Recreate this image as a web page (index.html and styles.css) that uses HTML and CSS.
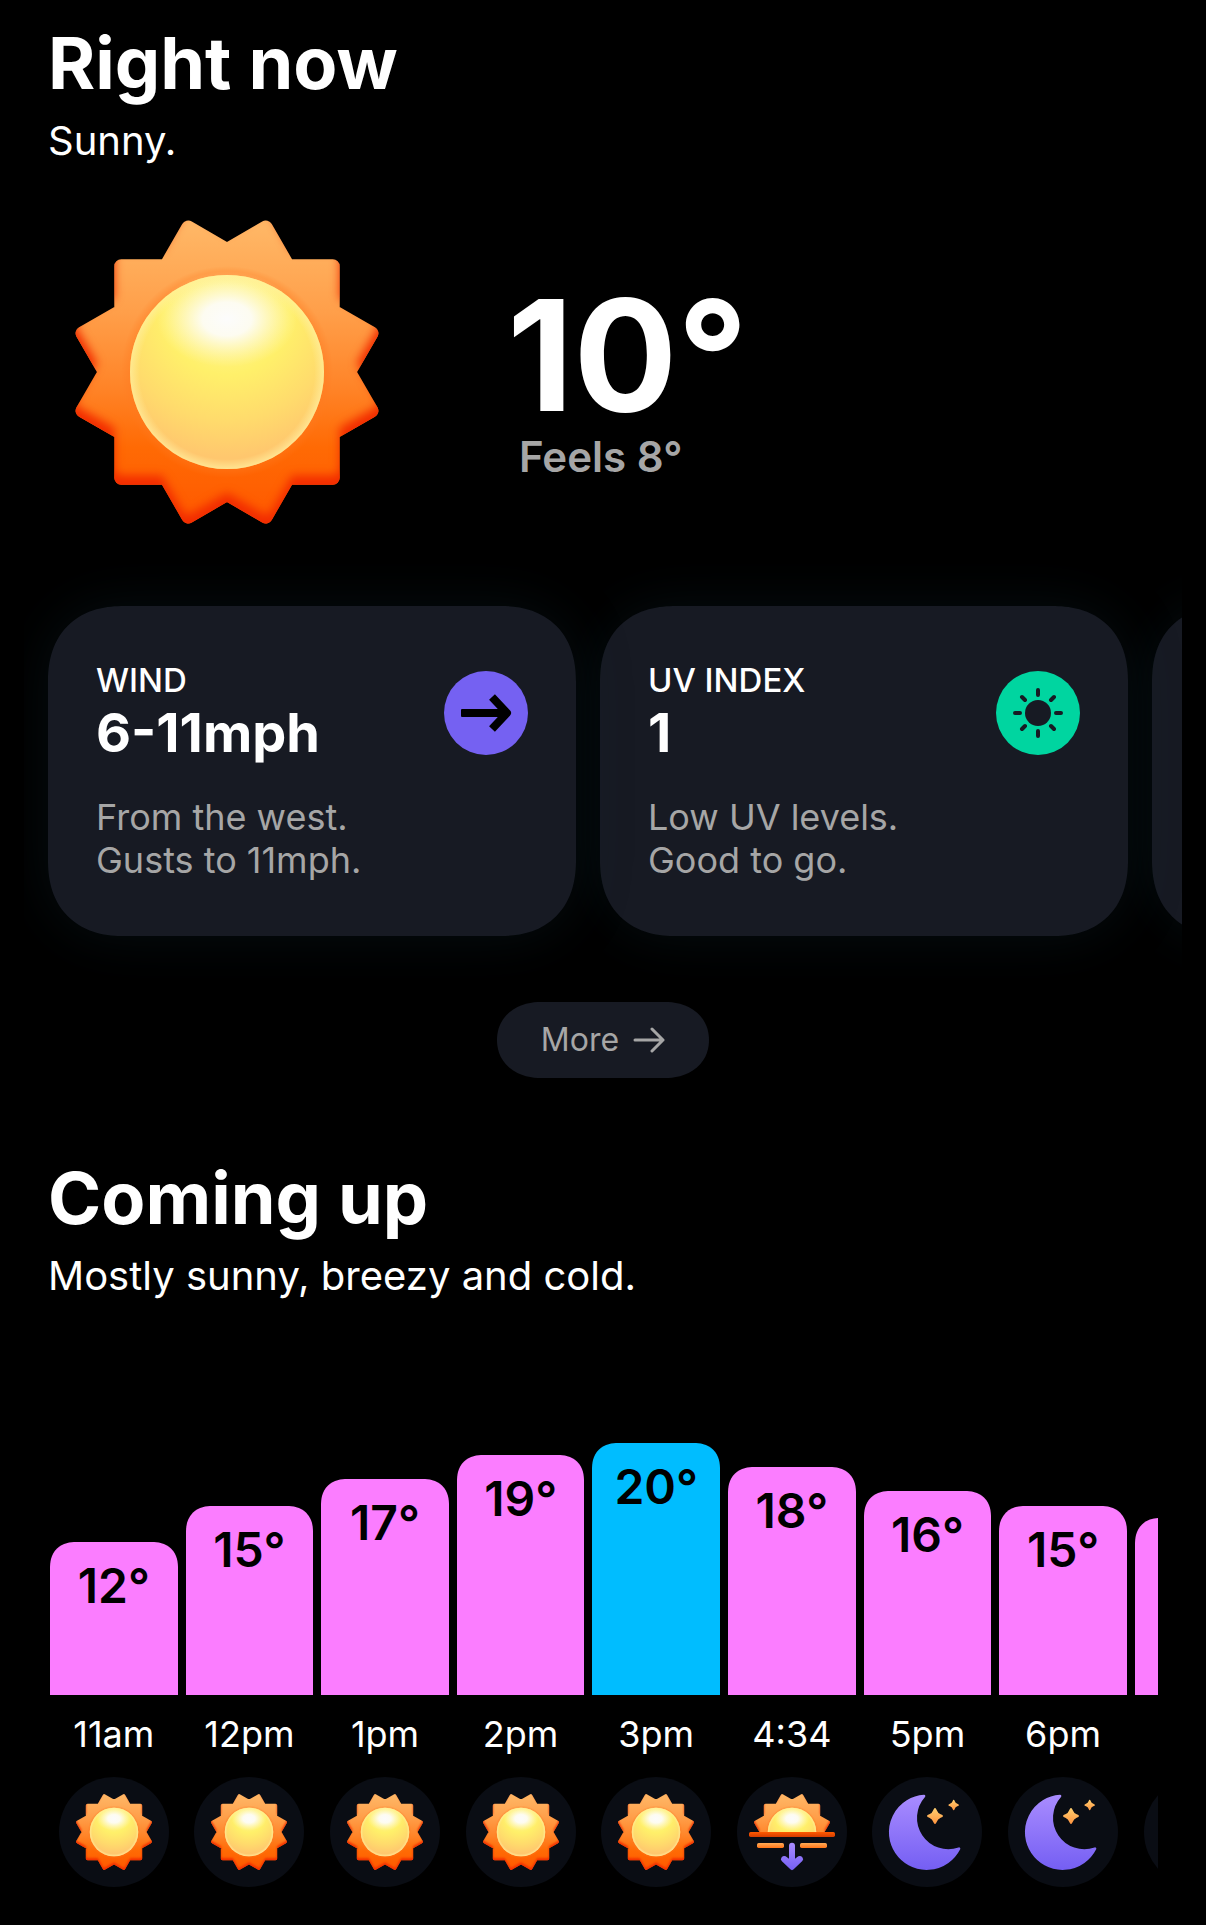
FILE: index.html
```html
<!DOCTYPE html>
<html lang="en">
<head>
<meta charset="utf-8">
<meta name="viewport" content="width=device-width, initial-scale=1">
<title>Weather</title>
<link rel="stylesheet" href="styles.css">
</head>
<body>
<svg class="sprite" aria-hidden="true">
  <defs>
    <linearGradient id="rays" gradientUnits="userSpaceOnUse" x1="0" y1="-151" x2="0" y2="151">
      <stop offset="0" stop-color="#ffb867"/>
      <stop offset=".3" stop-color="#ff9f4a"/>
      <stop offset=".55" stop-color="#ff8428"/>
      <stop offset=".75" stop-color="#ff6a04"/>
      <stop offset="1" stop-color="#ff5800"/>
    </linearGradient>
    <radialGradient id="ball" gradientUnits="userSpaceOnUse" cx="0" cy="-60" r="165">
      <stop offset="0" stop-color="#fff6a0"/>
      <stop offset=".38" stop-color="#fff06a"/>
      <stop offset=".66" stop-color="#ffdb6c"/>
      <stop offset=".88" stop-color="#ffc76e"/>
    </radialGradient>
    <radialGradient id="shine">
      <stop offset="0" stop-color="#fcfcfc"/>
      <stop offset=".35" stop-color="#fdfcf6" stop-opacity=".95"/>
      <stop offset="1" stop-color="#fff8c0" stop-opacity="0"/>
    </radialGradient>
    <radialGradient id="rim" gradientUnits="userSpaceOnUse" cx="0" cy="0" r="97">
      <stop offset=".9" stop-color="#fff0a0" stop-opacity="0"/>
      <stop offset="1" stop-color="#fff0a0" stop-opacity=".7"/>
    </radialGradient>
    <radialGradient id="halo" gradientUnits="userSpaceOnUse" cx="0" cy="0" r="106">
      <stop offset=".9" stop-color="#ff7a20" stop-opacity=".5"/>
      <stop offset="1" stop-color="#ff7a20" stop-opacity="0"/>
    </radialGradient>
    <filter id="bevel" x="-10%" y="-10%" width="120%" height="120%" color-interpolation-filters="sRGB">
      <feGaussianBlur in="SourceAlpha" stdDeviation="5"/>
      <feOffset dy="-9" result="inner"/>
      <feFlood flood-color="#f22c00"/>
      <feComposite operator="out" in2="inner"/>
      <feComposite operator="in" in2="SourceAlpha" result="edge"/>
      <feMerge><feMergeNode in="SourceGraphic"/><feMergeNode in="edge"/></feMerge>
    </filter>
    <linearGradient id="night" gradientUnits="userSpaceOnUse" x1="0" y1="-112" x2="0" y2="112">
      <stop offset="0" stop-color="#a98cff"/>
      <stop offset="1" stop-color="#755ff3"/>
    </linearGradient>
    <linearGradient id="down" gradientUnits="userSpaceOnUse" x1="0" y1="33" x2="0" y2="114">
      <stop offset="0" stop-color="#a98cff"/>
      <stop offset="1" stop-color="#755ff3"/>
    </linearGradient>
    <linearGradient id="star" x1="0" y1="0" x2="0" y2="1">
      <stop offset="0" stop-color="#ffd070"/>
      <stop offset="1" stop-color="#ff9440"/>
    </linearGradient>
    <linearGradient id="haze" x1="0" y1="0" x2="0" y2="1">
      <stop offset="0" stop-color="#ffab58"/>
      <stop offset="1" stop-color="#ff7418"/>
    </linearGradient>
    <linearGradient id="horizon" x1="0" y1="0" x2="0" y2="1">
      <stop offset="0" stop-color="#ff5a00"/>
      <stop offset="1" stop-color="#d43c00"/>
    </linearGradient>
    <clipPath id="above"><rect x="-165" y="-165" width="330" height="166"/></clipPath>

    <g id="sun">
      <polygon fill="url(#rays)" stroke="url(#rays)" stroke-width="14" stroke-linejoin="round" filter="url(#bevel)"
        points="122,0 144.4,38.7 105.7,61 105.7,105.7 61,105.7 38.7,144.4 0,122 -38.7,144.4 -61,105.7 -105.7,105.7 -105.7,61 -144.4,38.7 -122,0 -144.4,-38.7 -105.7,-61 -105.7,-105.7 -61,-105.7 -38.7,-144.4 0,-122 38.7,-144.4 61,-105.7 105.7,-105.7 105.7,-61 144.4,-38.7"/>
      <circle r="106" fill="url(#halo)"/>
      <circle r="97" fill="url(#ball)"/>
      <ellipse cx="0" cy="-53" rx="70" ry="48" fill="url(#shine)"/>
      <circle r="97" fill="url(#rim)"/>
    </g>
    <g id="sunny"><use href="#sun" transform="scale(.75)"/></g>
    <g id="sunset">
      <g clip-path="url(#above)"><use href="#sun" transform="scale(.75)"/></g>
      <rect x="-129" y="0" width="258" height="15" rx="5" fill="url(#horizon)"/>
      <rect x="-105" y="33" width="81" height="15" rx="5" fill="url(#haze)"/>
      <rect x="24" y="33" width="81" height="15" rx="5" fill="url(#haze)"/>
      <path fill="url(#down)" d="M-9 41a9 9 0 0 1 18 0V80L19 73Q26 70 31 76Q36 82 31 87L5 112Q0 117-5 112L-31 87Q-36 82-31 76Q-26 70-19 73L-9 80Z"/>
    </g>
    <g id="moon">
      <path fill="url(#night)" stroke="url(#night)" stroke-width="8" stroke-linejoin="round" d="M-9-108A109 109 0 1 0 96 50A98 98 0 0 1-9-108Z"/>
      <path fill="url(#star)" d="M24-72Q27-72 29-66Q32-57 41-53Q48-51 48-48Q48-45 41-43Q32-39 29-30Q27-24 24-24Q21-24 19-30Q16-39 7-43Q0-45 0-48Q0-51 7-53Q16-57 19-66Q21-72 24-72Z"/>
      <path fill="url(#star)" d="M80-97Q82-97 83-93Q85-87 91-85Q96-83 96-81Q96-79 91-77Q85-75 83-69Q82-65 80-65Q78-65 77-69Q75-75 69-77Q64-79 64-81Q64-83 69-85Q75-87 77-93Q78-97 80-97Z"/>
    </g>
  </defs>
</svg>

<main class="page">
  <section>
    <header class="heading">
      <h2 class="title">Right now</h2>
      <p class="subtitle">Sunny.</p>
    </header>

    <div class="current">
      <svg class="current-icon" viewBox="-160 -160 320 320" role="img" aria-label="Sunny"><use href="#sun"/></svg>
      <div class="current-temps">
        <p class="temp">10°</p>
        <p class="feels">Feels 8°</p>
      </div>
    </div>

    <div class="cards">
      <article class="card">
        <div class="card-head">
          <div>
            <h3 class="card-label">WIND</h3>
            <p class="card-value">6-11mph</p>
          </div>
          <svg class="badge badge-wind" viewBox="-42 -42 84 84" aria-hidden="true">
            <path d="M-24 0H18" fill="none" stroke="#000" stroke-width="8"/>
            <path d="M6-16L21 0L6 16" fill="none" stroke="#000" stroke-width="8" stroke-linejoin="round"/>
            <rect x="-25" y="-4" width="6" height="8" rx="1"/>
          </svg>
        </div>
        <p class="card-text">From the west.<br>Gusts to 11mph.</p>
      </article>
      <article class="card">
        <div class="card-head">
          <div>
            <h3 class="card-label">UV INDEX</h3>
            <p class="card-value">1</p>
          </div>
          <svg class="badge badge-uv" viewBox="-42 -42 84 84" aria-hidden="true">
            <circle r="13" fill="#171a23"/>
            <path stroke="#171a23" stroke-width="4" stroke-linecap="round" d="M0-23V-18M0 23V18M-23 0H-18M23 0H18M-16-16L-13-13M16-16L13-13M-16 16L-13 13M16 16L13 13"/>
          </svg>
        </div>
        <p class="card-text">Low UV levels.<br>Good to go.</p>
      </article>
      <article class="card" aria-hidden="true"></article>
    </div>

    <button class="more" type="button">More
      <svg class="more-arrow" viewBox="0 0 32 32" aria-hidden="true"><path d="M2 16H30M19 5L30 16L19 27" fill="none" stroke="currentColor" stroke-width="3" stroke-linecap="round" stroke-linejoin="round"/></svg>
    </button>
  </section>

  <section>
    <header class="heading">
      <h2 class="title">Coming up</h2>
      <p class="subtitle">Mostly sunny, breezy and cold.</p>
    </header>

    <ol class="hours">
      <li class="hour"><div class="bar" style="height:153px">12°</div><span class="time">11am</span><svg class="disc" viewBox="-165 -165 330 330"><use href="#sunny"/></svg></li>
      <li class="hour"><div class="bar" style="height:189px">15°</div><span class="time">12pm</span><svg class="disc" viewBox="-165 -165 330 330"><use href="#sunny"/></svg></li>
      <li class="hour"><div class="bar" style="height:216px">17°</div><span class="time">1pm</span><svg class="disc" viewBox="-165 -165 330 330"><use href="#sunny"/></svg></li>
      <li class="hour"><div class="bar" style="height:240px">19°</div><span class="time">2pm</span><svg class="disc" viewBox="-165 -165 330 330"><use href="#sunny"/></svg></li>
      <li class="hour"><div class="bar bar-peak" style="height:252px">20°</div><span class="time">3pm</span><svg class="disc" viewBox="-165 -165 330 330"><use href="#sunny"/></svg></li>
      <li class="hour"><div class="bar" style="height:228px">18°</div><span class="time">4:34</span><svg class="disc" viewBox="-165 -165 330 330"><use href="#sunset"/></svg></li>
      <li class="hour"><div class="bar" style="height:204px">16°</div><span class="time">5pm</span><svg class="disc" viewBox="-165 -165 330 330"><use href="#moon"/></svg></li>
      <li class="hour"><div class="bar" style="height:189px">15°</div><span class="time">6pm</span><svg class="disc" viewBox="-165 -165 330 330"><use href="#moon"/></svg></li>
      <li class="hour" aria-hidden="true"><div class="bar" style="height:177px"></div><span class="time"></span><svg class="disc"></svg></li>
    </ol>
  </section>
</main>
</body>
</html>
```

FILE: styles.css
```css
* {
  box-sizing: border-box;
}

body {
  margin: 0;
  background: #000;
  color: #fff;
  font-family: Inter, "Liberation Sans", sans-serif;
}

h2,
h3,
p,
ol {
  margin: 0;
  padding: 0;
}

.sprite {
  position: absolute;
  width: 0;
  height: 0;
}

.page {
  padding: 20px 0 36px;
}

.heading {
  padding: 0 48px;
}

.title {
  font-size: 72px;
  line-height: 86px;
  font-weight: 700;
}

.subtitle {
  margin-top: 10px;
  font-size: 40px;
  line-height: 50px;
}

.current {
  display: flex;
  align-items: center;
  gap: 120px;
  margin: 46px 67px 74px;
}

.current-icon {
  width: 320px;
  height: 320px;
}

.current-temps {
  padding-top: 18px;
}

.temp {
  font-size: 154px;
  line-height: 148px;
  font-weight: 700;
}

.feels {
  margin-top: 4px;
  padding-left: 12px;
  color: #a6a6a6;
  font-size: 42px;
  line-height: 48px;
  font-weight: 600;
}

.cards {
  display: flex;
  gap: 24px;
  margin: 0 24px;
  padding-left: 24px;
  overflow-x: clip;
}

.card {
  flex: 0 0 528px;
  padding: 54px 48px;
  border-radius: 72px;
  background: #171a23;
  box-shadow: 0 0 56px rgba(20, 50, 60, .28);
}

/* Keeps each card above the glow of the card after it. */
.card:nth-child(1) {
  z-index: 3;
}

.card:nth-child(2) {
  z-index: 2;
}

.card-head {
  display: flex;
  justify-content: space-between;
  align-items: center;
}

.card-label {
  font-size: 33px;
  line-height: 40px;
  font-weight: 500;
}

.card-value {
  font-size: 54px;
  line-height: 66px;
  font-weight: 700;
}

.badge {
  width: 84px;
  height: 84px;
  border-radius: 50%;
}

.badge-wind {
  background: #7561f2;
}

.badge-uv {
  background: #00d5a0;
}

.card-text {
  margin-top: 30px;
  color: #a6a6a6;
  font-size: 36px;
  line-height: 43px;
}

.more {
  display: flex;
  align-items: center;
  justify-content: center;
  gap: 14px;
  width: 212px;
  height: 76px;
  margin: 66px auto 77px;
  padding: 0;
  border: 0;
  border-radius: 38px;
  background: #171a23;
  color: #a6a6a6;
  font: 400 32px/40px Inter, "Liberation Sans", sans-serif;
}

.more-arrow {
  width: 32px;
  height: 32px;
}

.hours {
  display: grid;
  grid-auto-flow: column;
  grid-auto-columns: calc(100% / 8.17);
  margin: 142px 48px 0;
  padding-left: 2px;
  overflow: hidden;
  list-style: none;
}

.hour {
  display: flex;
  flex-direction: column;
  align-items: center;
  justify-content: flex-end;
  padding-right: 8px;
}

.bar {
  width: 100%;
  padding-top: 16px;
  border-radius: 28px 28px 0 0;
  background: #fb7dff;
  color: #000;
  font-size: 48px;
  line-height: 56px;
  font-weight: 600;
  text-align: center;
}

.bar-peak {
  background: #00bdff;
}

.time {
  height: 44px;
  margin: 17px 0 21px;
  font-size: 36px;
  line-height: 44px;
}

.disc {
  flex: none;
  width: 110px;
  height: 110px;
  border-radius: 50%;
  background: #0a0d14;
}

@supports (corner-shape: squircle) {
  .card {
    border-radius: 76px;
    corner-shape: superellipse(1.2);
  }

  .more {
    border-radius: 44px / 38px;
    corner-shape: superellipse(1.1);
  }

  .bar {
    border-radius: 26px 26px 0 0;
    corner-shape: superellipse(1.2);
  }
}
```
